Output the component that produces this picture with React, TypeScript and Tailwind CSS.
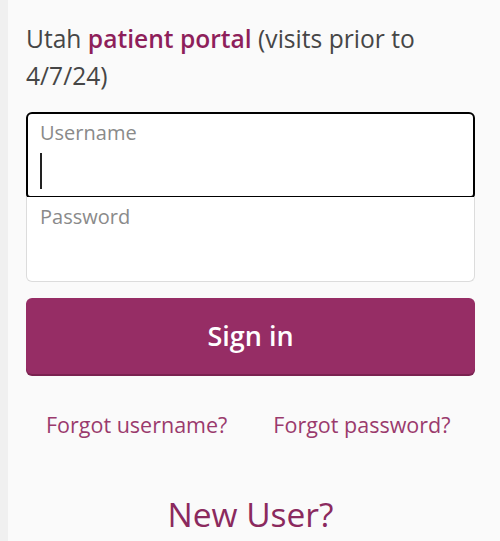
const font = { fontFamily: '"Open Sans", "Noto Sans", sans-serif' };

export default function App() {
  return (
    <div className="min-h-[541px] w-[500px] bg-[#fafafa] border-l-[8px] border-[#f0f0f0]" style={font}>
      <div className="pl-[18px] pr-[25px] pt-[20px]">
        <p className="text-[24.6px] leading-[37px] text-[#464646]">
          Utah <span className="font-semibold text-[#8e1f5b]">patient portal</span> (visits prior to 4/7/24)
        </p>

        <div className="mt-[18px]">
          <div className="h-[86px] rounded-t-[6px] rounded-b-[4px] border-2 border-black bg-white px-[12px] pt-[5px]">
            <div className="text-[20px] leading-[28px] text-[#8a8a8a]">Username</div>
            <div className="mt-[6px] h-[36px] w-[1.5px] bg-[#222]" />
          </div>
          <div className="h-[85px] -mt-px rounded-b-[6px] border border-t-0 border-[#dcdcdc] bg-white px-[13px] pt-[6px]">
            <div className="text-[20px] leading-[28px] text-[#8a8a8a]">Password</div>
          </div>
        </div>

        <button className="mt-[16px] flex h-[76px] w-full items-center justify-center rounded-[6px] bg-[#962d65] text-[27px] font-semibold text-white shadow-[0_2px_0_#7a2250]">
          Sign in
        </button>

        <div className="mt-[35px] flex gap-[46px] pl-[20px] text-[21.5px] text-[#9a3a6d]">
          <span>Forgot username?</span>
          <span>Forgot password?</span>
        </div>

        <div className="mt-[51px] text-center text-[33.5px] leading-[44px] text-[#8b2a5e]">New User?</div>
      </div>
    </div>
  );
}
